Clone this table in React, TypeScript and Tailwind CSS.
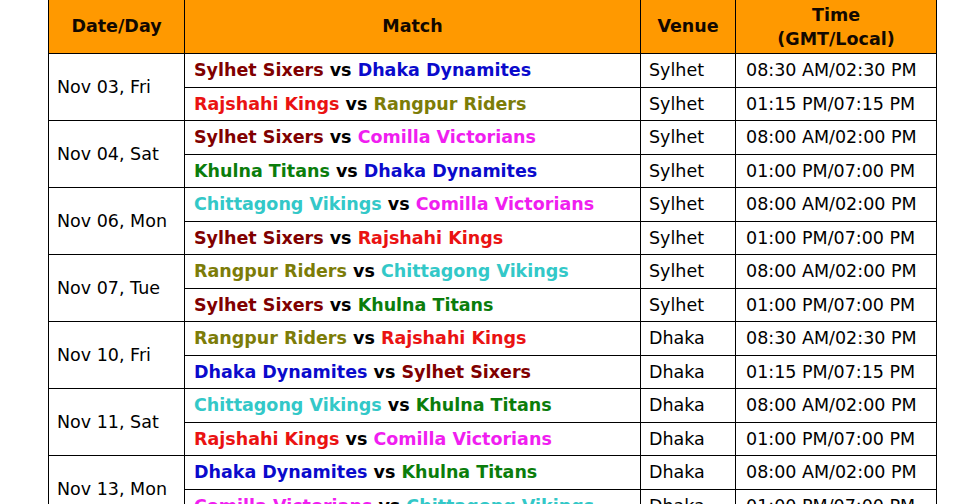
import React from "react";

const C: Record<string, string> = {
  "Sylhet Sixers": "text-[#800000]",
  "Rajshahi Kings": "text-[#ea1212]",
  "Dhaka Dynamites": "text-[#0a0acc]",
  "Rangpur Riders": "text-[#7c7c08]",
  "Comilla Victorians": "text-[#f01ef0]",
  "Khulna Titans": "text-[#0b7d0b]",
  "Chittagong Vikings": "text-[#33c8c8]",
};

type M = [string, string, string, string];
const groups: { date: string; matches: M[] }[] = [
  { date: "Nov 03, Fri", matches: [["Sylhet Sixers", "Dhaka Dynamites", "Sylhet", "08:30 AM/02:30 PM"], ["Rajshahi Kings", "Rangpur Riders", "Sylhet", "01:15 PM/07:15 PM"]] },
  { date: "Nov 04, Sat", matches: [["Sylhet Sixers", "Comilla Victorians", "Sylhet", "08:00 AM/02:00 PM"], ["Khulna Titans", "Dhaka Dynamites", "Sylhet", "01:00 PM/07:00 PM"]] },
  { date: "Nov 06, Mon", matches: [["Chittagong Vikings", "Comilla Victorians", "Sylhet", "08:00 AM/02:00 PM"], ["Sylhet Sixers", "Rajshahi Kings", "Sylhet", "01:00 PM/07:00 PM"]] },
  { date: "Nov 07, Tue", matches: [["Rangpur Riders", "Chittagong Vikings", "Sylhet", "08:00 AM/02:00 PM"], ["Sylhet Sixers", "Khulna Titans", "Sylhet", "01:00 PM/07:00 PM"]] },
  { date: "Nov 10, Fri", matches: [["Rangpur Riders", "Rajshahi Kings", "Dhaka", "08:30 AM/02:30 PM"], ["Dhaka Dynamites", "Sylhet Sixers", "Dhaka", "01:15 PM/07:15 PM"]] },
  { date: "Nov 11, Sat", matches: [["Chittagong Vikings", "Khulna Titans", "Dhaka", "08:00 AM/02:00 PM"], ["Rajshahi Kings", "Comilla Victorians", "Dhaka", "01:00 PM/07:00 PM"]] },
  { date: "Nov 13, Mon", matches: [["Dhaka Dynamites", "Khulna Titans", "Dhaka", "08:00 AM/02:00 PM"], ["Comilla Victorians", "Chittagong Vikings", "Dhaka", "01:00 PM/07:00 PM"]] },
];

export default function App() {
  return (
    <div className="min-h-screen bg-white pl-[48px] font-['DejaVu_Sans',sans-serif] text-[17.5px] text-black">
      <div className="w-[889px] border-l border-black">
        <div className="flex h-[54px] bg-[#ff9900] font-bold text-[#120800]">
          <div className="flex w-[136px] items-center justify-center border-b border-r border-black">Date/Day</div>
          <div className="flex w-[456px] items-center justify-center border-b border-r border-black">Match</div>
          <div className="flex w-[95px] items-center justify-center border-b border-r border-black">Venue</div>
          <div className="flex w-[201px] flex-col items-center justify-center border-b border-r border-black leading-[24px]">
            <span>Time</span>
            <span>(GMT/Local)</span>
          </div>
        </div>
        {groups.map((g) => (
          <div key={g.date} className="flex h-[67px]">
            <div className="flex w-[136px] items-center border-b border-r border-black pl-[8px]">{g.date}</div>
            <div className="flex flex-col">
              {g.matches.map((m, i) => (
                <div key={i} className={`flex ${i === 0 ? "h-[34px]" : "h-[33px]"}`}>
                  <div className="flex w-[456px] items-center border-b border-r border-black pl-[9px] font-bold">
                    <span className={C[m[0]]}>{m[0]}</span>
                    <span className="whitespace-pre"> vs </span>
                    <span className={C[m[1]]}>{m[1]}</span>
                  </div>
                  <div className="flex w-[95px] items-center border-b border-r border-black pl-[8px]">{m[2]}</div>
                  <div className="flex w-[201px] items-center border-b border-r border-black pl-[10px]">{m[3]}</div>
                </div>
              ))}
            </div>
          </div>
        ))}
      </div>
    </div>
  );
}
